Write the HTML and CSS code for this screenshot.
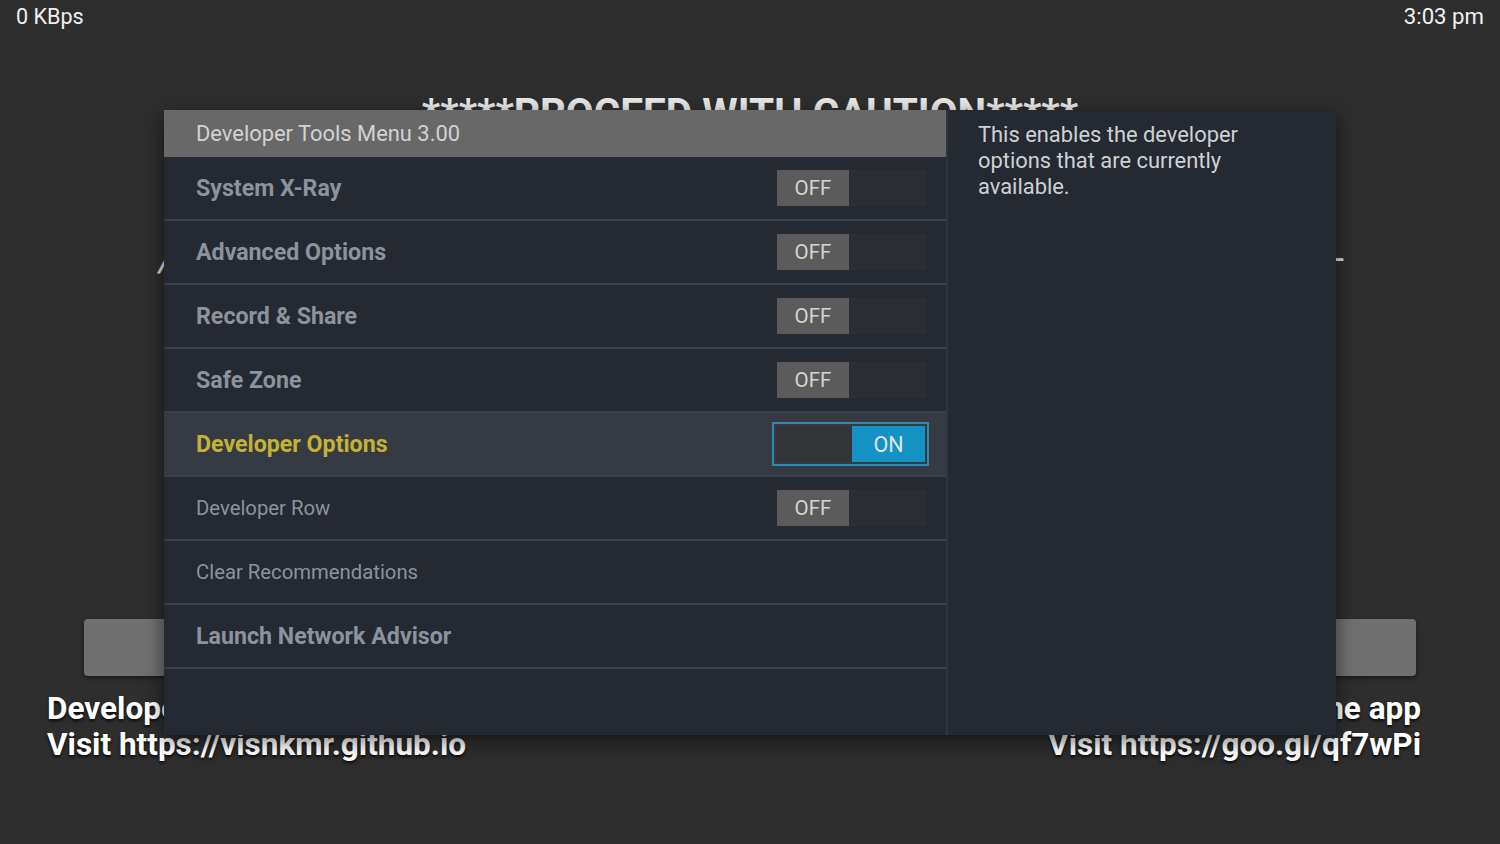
FILE: index.html
```html
<!DOCTYPE html>
<html>
<head>
<meta charset="utf-8">
<link rel="stylesheet" href="styles.css">
</head>
<body>
<div class="screen">
  <div class="status">
    <span class="kbps">0 KBps</span>
    <span class="clock">3:03 pm</span>
  </div>
  <div class="title">*****PROCEED WITH CAUTION*****</div>
  <div class="edge-row">
    <span class="slash">/</span>
    <span class="dash">-</span>
  </div>
  <div class="buttons">
    <div class="btn"></div>
    <div class="btn"></div>
  </div>
  <div class="footer">
    <div class="foot-left">Developed by visnkmr<br>Visit https://visnkmr.github.io</div>
    <div class="foot-right">Uninstall the app<br>Visit https://goo.gl/qf7wPi</div>
  </div>

  <div class="dialog">
    <div class="menu">
      <div class="menu-head">Developer Tools Menu 3.00</div>
      <div class="row"><span class="label bold">System X-Ray</span><span class="toggle"><span class="off">OFF</span><span class="track"></span></span></div>
      <div class="row"><span class="label bold">Advanced Options</span><span class="toggle"><span class="off">OFF</span><span class="track"></span></span></div>
      <div class="row"><span class="label bold">Record &amp; Share</span><span class="toggle"><span class="off">OFF</span><span class="track"></span></span></div>
      <div class="row"><span class="label bold">Safe Zone</span><span class="toggle"><span class="off">OFF</span><span class="track"></span></span></div>
      <div class="row selected"><span class="label bold">Developer Options</span><span class="toggle focused"><span class="track"></span><span class="on">ON</span></span></div>
      <div class="row"><span class="label">Developer Row</span><span class="toggle"><span class="off">OFF</span><span class="track"></span></span></div>
      <div class="row"><span class="label">Clear Recommendations</span></div>
      <div class="row"><span class="label bold">Launch Network Advisor</span></div>
    </div>
    <div class="info">
      <p>This enables the developer options that are currently available.</p>
    </div>
  </div>
</div>
</body>
</html>
```
FILE: styles.css
```css
* { box-sizing: border-box; }
html, body {
  margin: 0;
  padding: 0;
}
body {
  background: #2e2e2e;
  font-family: Roboto, "Noto Sans", sans-serif;
  color: #f2f2f2;
}
.screen {
  position: relative;
  width: 1500px;
  height: 844px;
  overflow: hidden;
  display: flex;
  flex-direction: column;
}
.status {
  height: 32px;
  display: flex;
  justify-content: space-between;
  align-items: center;
  padding: 0 16px;
  color: #f0f0f0;
}
.kbps { font-size: 21.6px; }
.clock { font-size: 22.2px; }
.title {
  margin-top: 58px;
  height: 46px;
  line-height: 46px;
  font-size: 40.5px;
  font-weight: 700;
  text-align: center;
  color: #e8e8e8;
}
.edge-row {
  margin-top: 102px;
  height: 42px;
  display: flex;
  justify-content: space-between;
  align-items: center;
  padding: 0 156px 0 159px;
  font-size: 36px;
  color: #e0e0e0;
}
.slash { font-style: italic; }
.buttons {
  margin-top: 339px;
  height: 57px;
  display: flex;
  justify-content: space-between;
  padding: 0 84px;
}
.btn {
  width: 300px;
  height: 57px;
  background: #707070;
  border-radius: 4px;
  box-shadow: 0 2px 4px rgba(0,0,0,0.5);
}
.footer {
  margin-top: 15px;
  display: flex;
  justify-content: space-between;
  padding: 0 79px 0 47px;
  font-size: 31.5px;
  font-weight: 700;
  line-height: 36px;
  color: #ffffff;
  text-shadow: 0 2px 3px rgba(0,0,0,0.8);
}
.foot-right { text-align: right; }

.dialog {
  position: absolute;
  left: 164px;
  top: 110px;
  width: 1172px;
  height: 625px;
  display: grid;
  grid-template-columns: 784px 388px;
  background: #242932;
  box-shadow: 0 6px 18px rgba(0,0,0,0.55);
}
.menu {
  display: flex;
  flex-direction: column;
  border-right: 2px solid #2f353e;
}
.menu-head {
  height: 47px;
  background: #686868;
  color: #d2d2d2;
  font-size: 21.9px;
  display: flex;
  align-items: center;
  padding-left: 32px;
}
.row {
  height: 64px;
  display: flex;
  align-items: center;
  justify-content: space-between;
  padding: 0 20px 0 32px;
  border-bottom: 2px solid #3a414b;
}
.row.selected { background: #363a43; }
.label {
  font-size: 20.3px;
  color: #8d939c;
}
.label.bold {
  font-size: 23.2px;
  font-weight: 700;
}
.selected .label { color: #c2b334; }
.toggle {
  display: flex;
  width: 149px;
  height: 36px;
}
.toggle .off {
  width: 72px;
  background: #5b5b5b;
  color: #d4d4d4;
  font-size: 20.5px;
  display: flex;
  align-items: center;
  justify-content: center;
}
.toggle .track {
  flex: 1;
  background: #2b2e34;
}
.toggle.focused {
  width: 157px;
  height: 44px;
  border: 2px solid #2c8db3;
  padding: 2px;
  margin-right: -3px;
}
.toggle.focused .track { background: #333438; }
.toggle .on {
  width: 73px;
  background: #1592c4;
  color: #dfe6ea;
  font-size: 21.5px;
  display: flex;
  align-items: center;
  justify-content: center;
}
.info {
  padding: 12px 30px;
}
.info p {
  margin: 0;
  max-width: 310px;
  font-size: 21.9px;
  line-height: 26px;
  color: #d0d1d3;
}
```
